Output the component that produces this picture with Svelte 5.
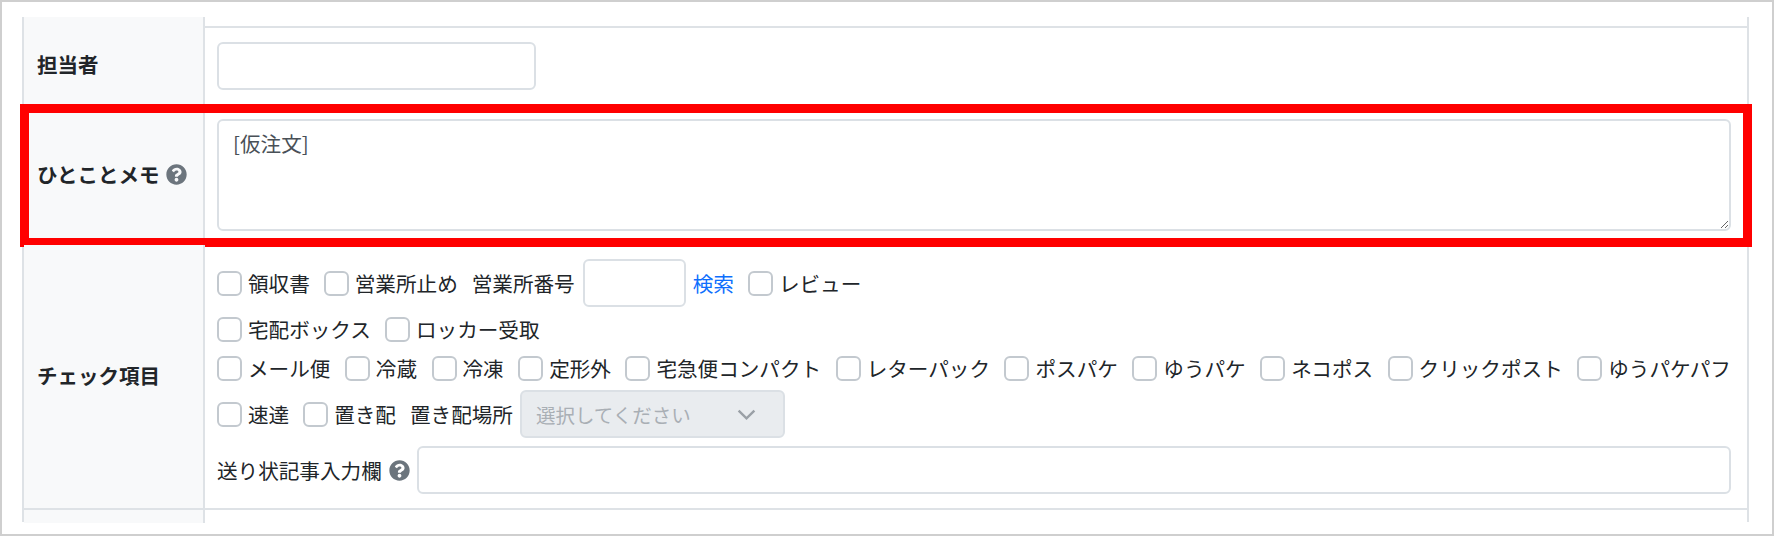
<script>
	// one row of checkboxes per line, same order as the form
	const deliveryTypes = ["メール便", "冷蔵", "冷凍", "定形外", "宅急便コンパクト", "レターパック", "ポスパケ", "ゆうパケ", "ネコポス", "クリックポスト", "ゆうパケパフ"];
	const helpPath = "M504 256c0 136.997-111.043 248-248 248S8 392.997 8 256C8 119.083 119.043 8 256 8s248 111.083 248 248zM262.655 90c-54.497 0-89.255 22.957-116.549 63.758-3.536 5.286-2.353 12.415 2.715 16.258l34.699 26.31c5.205 3.947 12.621 3.008 16.665-2.122 17.864-22.658 30.113-35.797 57.303-35.797 20.429 0 45.698 13.148 45.698 32.958 0 14.976-12.363 22.667-32.534 33.976C247.128 238.528 216 254.941 216 296v4c0 6.627 5.373 12 12 12h56c6.627 0 12-5.373 12-12v-1.333c0-28.462 83.186-29.647 83.186-106.667 0-58.002-60.165-102-116.531-102zM256 338c-25.365 0-46 20.635-46 46 0 25.364 20.635 46 46 46s46-20.636 46-46c0-25.365-20.635-46-46-46z";
</script>

{#snippet check(label)}
	<label class="check"><input type="checkbox" />{label}</label>
{/snippet}

{#snippet help()}
	<svg class="help" viewBox="0 0 512 512" aria-hidden="true"><path d={helpPath} /></svg>
{/snippet}

<div class="frame">
	<div class="table">
		<div class="row stub">
			<div class="head"></div>
			<div class="cell"></div>
		</div>

		<div class="row staff">
			<div class="head">担当者</div>
			<div class="cell"><input class="field staff-input" type="text" /></div>
		</div>

		<div class="row memo">
			<div class="head">ひとことメモ {@render help()}</div>
			<div class="cell"><textarea class="field memo-input">[仮注文]</textarea></div>
			<div class="highlight"></div>
		</div>

		<div class="row checks">
			<div class="head">チェック項目</div>
			<div class="cell lines">
				<div class="line first">
					{@render check("領収書")}
					{@render check("営業所止め")}
					<span class="caption">営業所番号</span>
					<input class="field office-input" type="text" />
					<a class="search" href="#search">検索</a>
					{@render check("レビュー")}
				</div>
				<div class="line second">
					{@render check("宅配ボックス")}
					{@render check("ロッカー受取")}
				</div>
				<div class="line third">
					{#each deliveryTypes as type}
						{@render check(type)}
					{/each}
				</div>
				<div class="line fourth">
					{@render check("速達")}
					{@render check("置き配")}
					<span class="caption">置き配場所</span>
					<div class="select">
						<span>選択してください</span>
						<svg viewBox="0 0 16 16" aria-hidden="true"><path d="M2 5l6 6 6-6" /></svg>
					</div>
				</div>
				<div class="line fifth">
					<span class="note">送り状記事入力欄 {@render help()}</span>
					<input class="field note-input" type="text" />
				</div>
			</div>
		</div>

		<div class="row stub end">
			<div class="head"></div>
			<div class="cell"></div>
		</div>
	</div>
</div>

<style>
	:global(body) {
		margin: 0;
		background: #fff;
	}
	.frame {
		box-sizing: border-box;
		width: 1774px;
		height: 536px;
		border: 2px solid #cfcfcf;
		padding: 15px 23px 0 20px;
		font-family: "Noto Sans CJK JP", sans-serif;
		font-size: 20.5px;
		color: #212529;
		overflow: hidden;
	}
	.table {
		border-left: 2px solid #dee2e6;
		border-right: 2px solid #dee2e6;
	}
	.row {
		display: grid;
		grid-template-columns: 181px 1fr;
		border-bottom: 2px solid #dee2e6;
		position: relative;
	}
	.row.stub {
		height: 9px;
	}
	.row.end {
		height: 12px;
		border-bottom: 0;
	}
	.row.staff {
		height: 78px;
	}
	.row.memo {
		height: 135px;
	}
	.row.checks {
		height: 263px;
	}
	.head {
		background: #f8f9fa;
		border-right: 2px solid #dee2e6;
		display: flex;
		align-items: center;
		gap: 7px;
		padding: 0 0 5px 13px;
		font-weight: 700;
	}
	.staff .head {
		padding-bottom: 6px;
	}
	.memo .head,
	.checks .head {
		padding-bottom: 3px;
	}
	.cell {
		padding: 13px 16px 0 12px;
	}
	.staff .cell {
		padding-top: 14px;
	}
	.memo .cell {
		padding-top: 11px;
	}
	.field {
		box-sizing: border-box;
		display: block;
		border: 2px solid #dbe0e5;
		border-radius: 6px;
		background: #fff;
		font: inherit;
		color: #495057;
		outline: none;
	}
	.staff-input {
		width: 319px;
		height: 48px;
	}
	.memo-input {
		width: 100%;
		height: 112px;
		padding: 8px 14px;
		line-height: 1.4;
		resize: vertical;
		font-size: 20.6px;
	}
	.highlight {
		position: absolute;
		left: -4px;
		right: -5px;
		top: -4px;
		bottom: -4px;
		border: 9px solid #f00;
		pointer-events: none;
	}
	.lines {
		padding-top: 14px;
		display: flex;
		flex-direction: column;
	}
	.line {
		display: flex;
		align-items: center;
		white-space: nowrap;
	}
	.first {
		height: 48px;
	}
	.first .caption {
		margin-right: 8px;
	}
	.second {
		height: 44px;
	}
	.third {
		height: 34px;
		justify-content: space-between;
	}
	.fourth {
		height: 48px;
		margin-top: 5px;
	}
	.fifth {
		height: 48px;
		margin-top: 8px;
	}
	.check {
		display: inline-flex;
		align-items: center;
		gap: 6px;
		margin-right: 14px;
		font-size: 20.6px;
	}
	.third .check {
		margin-right: 0;
	}
	.check input {
		appearance: none;
		box-sizing: border-box;
		width: 25px;
		height: 25px;
		margin: 0;
		border: 2px solid #c3c9cf;
		border-radius: 6px;
		background: #fff;
	}
	.caption {
		margin-right: 7px;
		font-size: 20.6px;
	}
	.office-input {
		width: 103px;
		height: 48px;
		margin-right: 7px;
	}
	.search {
		color: #0d6efd;
		text-decoration: none;
		margin-right: 14px;
		font-size: 20.6px;
	}
	.select {
		box-sizing: border-box;
		width: 265px;
		height: 48px;
		display: flex;
		align-items: center;
		justify-content: space-between;
		padding: 0 26px 0 14px;
		background: #e9ecef;
		border: 2px solid #dbe0e5;
		border-radius: 6px;
		color: #a9afb5;
		font-size: 19.5px;
	}
	.select svg {
		width: 21px;
		height: 21px;
		fill: none;
		stroke: #9aa0a6;
		stroke-width: 1.8;
	}
	.note {
		display: inline-flex;
		align-items: center;
		gap: 7px;
		margin-right: 7px;
		font-size: 20.6px;
	}
	.note-input {
		flex: 1;
		height: 48px;
	}
	.help {
		width: 21px;
		height: 21px;
		fill: #6c757d;
		flex: none;
	}
</style>
